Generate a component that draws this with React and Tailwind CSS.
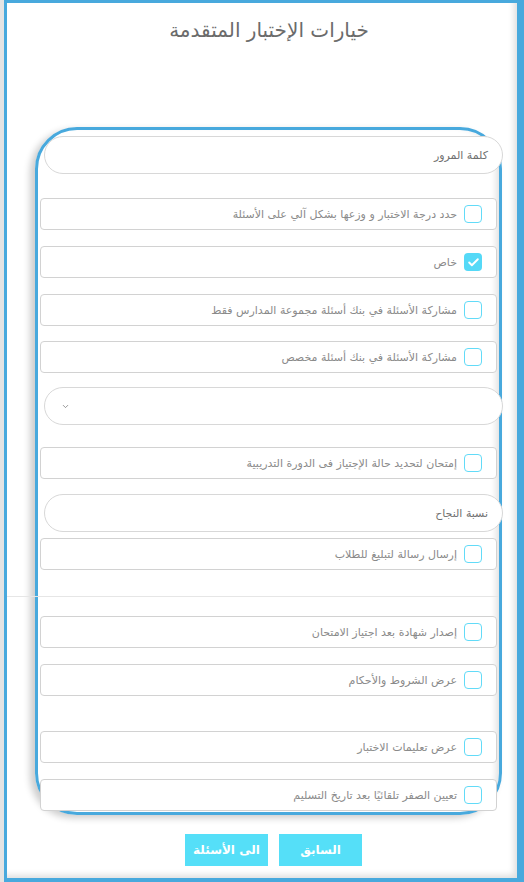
import { Check, ChevronDown } from 'lucide-react'

const font = { fontFamily: '"DejaVu Sans", sans-serif' }

function Row({ label, checked, mt }) {
  return (
    <div
      dir="rtl"
      className={`ml-[2px] flex h-[32px] w-[457px] items-center gap-[7px] rounded-[4px] border border-[#d2d2d2] bg-white pr-[14px] ${mt}`}
    >
      {checked ? (
        <span className="flex h-[18px] w-[18px] items-center justify-center rounded-[4px] bg-[#55d9f7]">
          <Check size={13} strokeWidth={3.5} className="text-white" />
        </span>
      ) : (
        <span className="h-[18px] w-[18px] rounded-[4px] border-[1.5px] border-[#62dbf8] bg-white" />
      )}
      <span className="pt-[2px] text-[11px] text-[#8a8a8a]">{label}</span>
    </div>
  )
}

function Pill({ children, mt, dir = 'rtl' }) {
  return (
    <div
      dir={dir}
      className={`ml-[6px] flex h-[38px] w-[459px] items-center rounded-full border border-[#d8d8d8] bg-white px-[14px] ${mt}`}
    >
      {children}
    </div>
  )
}

export default function App() {
  return (
    <div className="h-[882px] w-[524px] bg-[#e4e4e4] pl-[4px]" style={font}>
      <div className="h-[882px] w-[520px] border-t-[3px] border-l-[3px] border-r-[7px] border-b-[4px] border-[#48a9dd] bg-white shadow-[inset_-6px_-6px_6px_-3px_rgba(0,0,0,0.13)]">
        <h1 dir="rtl" className="pl-[14px] pt-[13px] text-center text-[20px] leading-[28px] text-[#6b6b6b]">
          خيارات الإختبار المتقدمة
        </h1>

        <div className="ml-[28px] mt-[83px] h-[688px] w-[467px] rounded-[42px] border-[3px] border-[#48a9dd] shadow-[-5px_3px_7px_rgba(0,0,0,0.2),inset_-7px_0_6px_-4px_rgba(0,0,0,0.12)]">
          <Pill mt="mt-[6px]">
            <span className="pt-[2px] text-[11px] text-[#707070]">كلمة المرور</span>
          </Pill>
          <Row mt="mt-[24px]" label="حدد درجة الاختبار و وزعها بشكل آلي على الأسئلة" />
          <Row mt="mt-[16px]" label="خاص" checked />
          <Row mt="mt-[16px]" label="مشاركة الأسئلة في بنك أسئلة مجموعة المدارس فقط" />
          <Row mt="mt-[15px]" label="مشاركة الأسئلة في بنك أسئلة مخصص" />
          <Pill mt="mt-[14px]" dir="ltr">
            <ChevronDown size={9} strokeWidth={2} className="ml-[2px] text-[#777]" />
          </Pill>
          <Row mt="mt-[22px]" label="إمتحان لتحديد حالة الإجتياز فى الدورة التدريبية" />
          <Pill mt="mt-[15px]">
            <span className="pt-[2px] text-[11px] text-[#707070]">نسبة النجاح</span>
          </Pill>
          <Row mt="mt-[6px]" label="إرسال رسالة لتبليغ للطلاب" />
          <div className="-ml-[31px] mt-[26px] h-px w-[492px] bg-[#e6e6e6]" />
          <Row mt="mt-[19px]" label="إصدار شهادة بعد اجتياز الامتحان" />
          <Row mt="mt-[16px]" label="عرض الشروط والأحكام" />
          <Row mt="mt-[35px]" label="عرض تعليمات الاختبار" />
          <Row mt="mt-[16px]" label="تعيين الصفر تلقائيًا بعد تاريخ التسليم" />
        </div>

        <div className="mt-[19px] flex gap-[11px] pl-[178px]">
          <button className="h-[32px] w-[83px] bg-[#55dff8] text-[12px] font-bold text-white">
            الى الأسئلة
          </button>
          <button className="h-[32px] w-[83px] bg-[#55dff8] text-[12px] font-bold text-white">
            السابق
          </button>
        </div>
      </div>
    </div>
  )
}
